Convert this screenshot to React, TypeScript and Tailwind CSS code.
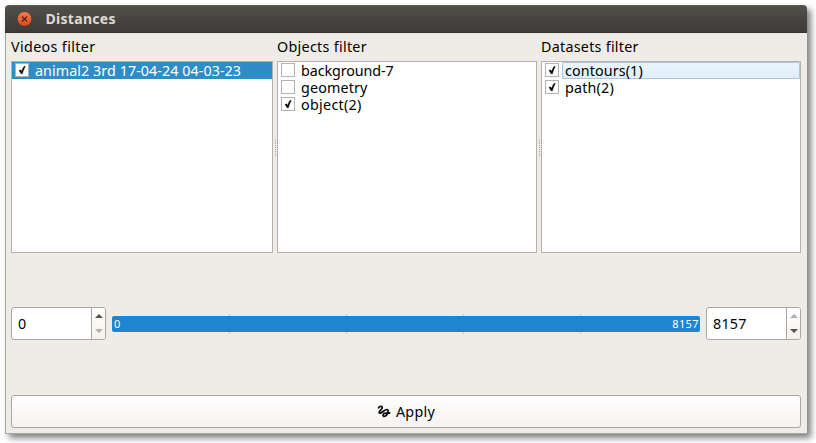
import React from "react";

type Item = { label: string; checked?: boolean; state?: "selected" | "hover"; tracking: string };

function Check({ checked }: { checked?: boolean }) {
  return (
    <span className="mt-px flex h-[14px] w-[14px] shrink-0 items-center justify-center border border-[#b5b1ac] bg-white">
      {checked && (
        <svg width="12" height="12" viewBox="0 0 12 12" fill="none">
          <path d="M3 6.2 L4.8 6 L5.6 7.6 C6.3 5.3 7.1 3.5 8.4 2.2 L9.3 2.5 C8.1 4.7 7.2 6.8 6.4 9.8 L5 9.8 Z" fill="#000" stroke="#000" strokeWidth=".4" />
        </svg>
      )}
    </span>
  );
}

function Row({ item }: { item: Item }) {
  const rowTone = item.state === "selected" ? "bg-[#308cc6] text-white" : "text-black";
  const labelTone =
    item.state === "hover"
      ? "rounded-[1px] border-[#a9c8de] bg-linear-to-b from-[#e8f5fe] to-[#e2edf7]"
      : "border-transparent";
  return (
    <div className={`flex h-[17px] items-start pl-[3px] ${rowTone}`}>
      <Check checked={item.checked} />
      <span className={`ml-[3px] h-[17px] flex-1 border pt-px pl-[2px] leading-[13px] whitespace-nowrap ${item.tracking} ${labelTone}`}>
        {item.label}
      </span>
    </div>
  );
}

function Panel({ title, tracking, items, width }: { title: string; tracking: string; items: Item[]; width: string }) {
  return (
    <section className={`flex flex-col ${width}`}>
      <h2 className={`flex h-[28px] items-center whitespace-nowrap text-black ${tracking}`}>{title}</h2>
      <div className="h-[192px] border border-[#b5b1ac] bg-white">
        {items.map((item) => (
          <Row key={item.label} item={item} />
        ))}
      </div>
    </section>
  );
}

function Splitter() {
  return (
    <div className="flex w-[4px] flex-col items-center pt-[106px]">
      {[0, 1, 2, 3, 4, 5, 6, 7, 8].map((n) => (
        <span key={n} className="mb-px h-px w-px bg-[#aaa6a1]" />
      ))}
    </div>
  );
}

function Spin({ value, up, down }: { value: string; up: string; down: string }) {
  return (
    <div className="flex h-[33px] w-[95px] overflow-hidden rounded-[3px] border border-[#aaa6a2] bg-white">
      <span className="flex flex-1 items-center pt-[2px] pl-[6px] tracking-[0.25px] text-black">{value}</span>
      <span className="flex w-[14px] flex-col items-center justify-between border-l border-[#aaa6a2] bg-linear-to-b from-white to-[#f3f1ee] pt-[6px] pb-[6px]">
        <svg width="8" height="4" viewBox="0 0 8 4"><path d="M0 4 L4 0 L8 4Z" fill={up} /></svg>
        <svg width="8" height="4" viewBox="0 0 8 4"><path d="M0 0 L4 4 L8 0Z" fill={down} /></svg>
      </span>
    </div>
  );
}

function Range() {
  return (
    <div className="relative h-[20px] w-[588px]">
      <span className="absolute top-0 left-[117px] h-[20px] w-px bg-[#c5c3f5]" />
      <span className="absolute top-0 left-[234px] h-[20px] w-px bg-[#c5c3f5]" />
      <span className="absolute top-0 left-[351px] h-[20px] w-px bg-[#c5c3f5]" />
      <span className="absolute top-0 left-[468px] h-[20px] w-px bg-[#c5c3f5]" />
      <div className="absolute top-[2px] flex h-[16px] w-[588px] items-center justify-between rounded-[2px] bg-[#2085d0] pr-px pl-[2px] text-[11px] leading-none text-white">
        <span>0</span>
        <span className="tracking-[0.4px]">8157</span>
      </div>
    </div>
  );
}

export default function App() {
  return (
    <div className="h-[443px] w-[816px] overflow-hidden bg-white pt-[5px] pl-[5px] font-['Noto_Sans',sans-serif] text-[14.3px] leading-none">
      <div className="h-[429px] w-[802px] rounded-t-[4px] bg-[#efebe7] shadow-[4px_4px_6px_0px_rgba(0,0,0,0.5)]">
        <header className="flex h-[28px] items-center rounded-t-[4px] border-t border-b border-t-[#5c5b55] border-b-[#34332f] bg-linear-to-b from-[#504f4a] to-[#3d3c38] pl-[12px]">
          <svg width="16" height="16" viewBox="0 0 16 16">
            <defs>
              <linearGradient id="close" x1="0" y1="0" x2="0" y2="1">
                <stop offset="0" stopColor="#f47d55" />
                <stop offset="1" stopColor="#dc4a1c" />
              </linearGradient>
            </defs>
            <circle cx="7.5" cy="8" r="7.4" fill="url(#close)" stroke="#3a302b" strokeWidth=".7" />
            <path d="M5 5.5 L10 10.5 M10 5.5 L5 10.5" stroke="#552516" strokeWidth="1.3" />
          </svg>
          <h1 className="ml-[12.5px] text-[14px] font-bold tracking-[0.3px] text-[#dfdbd2]">Distances</h1>
        </header>
        <main className="h-[401px] border-b border-l border-[#aaa6a2] pl-[5px]">
          <div className="flex">
            <Panel title="Videos filter" tracking="tracking-[0.36px]" width="w-[262px]" items={[{ label: "animal2 3rd 17-04-24 04-03-23", checked: true, state: "selected", tracking: "tracking-[0.07px]" }]} />
            <Splitter />
            <Panel
              title="Objects filter"
              tracking="tracking-[0.3px]"
              width="w-[260px]"
              items={[
                { label: "background-7", tracking: "tracking-[-0.08px]" },
                { label: "geometry", tracking: "tracking-[0.15px]" },
                { label: "object(2)", checked: true, tracking: "tracking-[0.3px]" },
              ]}
            />
            <Splitter />
            <Panel
              title="Datasets filter"
              tracking="tracking-[0.27px]"
              width="w-[260px]"
              items={[
                { label: "contours(1)", checked: true, state: "hover", tracking: "tracking-[0.12px]" },
                { label: "path(2)", checked: true, tracking: "tracking-[0.2px]" },
              ]}
            />
          </div>
          <div className="mt-[54px] flex w-[790px] items-center justify-between">
            <Spin value="0" up="#555350" down="#b0aeac" />
            <Range />
            <Spin value="8157" up="#b0aeac" down="#555350" />
          </div>
          <button className="mt-[55px] flex h-[33px] w-[790px] items-center justify-center rounded-[3px] border border-[#aaa6a2] bg-linear-to-b from-white to-[#f5f3f0] text-black">
            <svg width="14" height="14" viewBox="0 0 14 14" fill="none" stroke="#111" strokeWidth="1.8" strokeLinecap="round" strokeLinejoin="round">
              <path d="M1.6 2.8 C2 1.2 5.2 0.8 5.2 2.4 C5.2 4.6 2.2 5.6 2.2 7.4 C2.3 9 5 7.6 6.8 6 C8.8 4.2 11.4 4 11.2 6.6 C11 9.4 8 11.9 6.6 11.3 C5.2 10.4 6.4 8.2 8.5 8.2 L12.6 8" />
            </svg>
            <span className="ml-[5px] pt-px tracking-[0.3px]">Apply</span>
          </button>
        </main>
      </div>
    </div>
  );
}
